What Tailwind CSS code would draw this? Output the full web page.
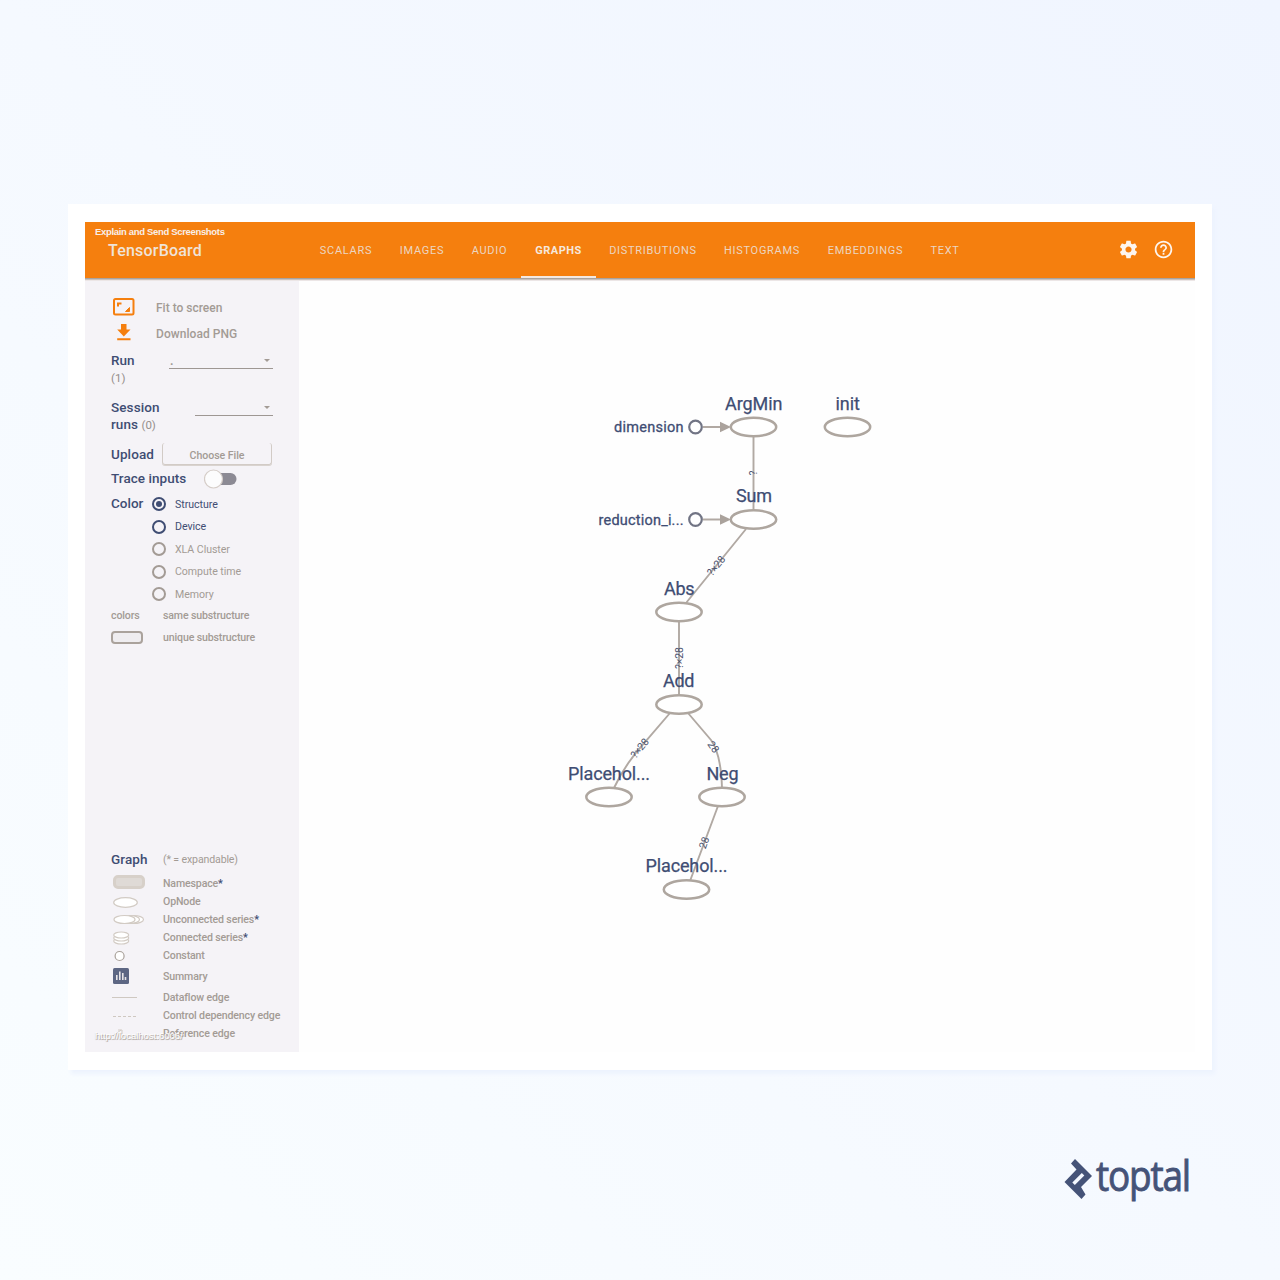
<!DOCTYPE html>
<html lang="en">
<head>
<meta charset="utf-8">
<title>TensorBoard</title>
<script src="https://cdn.jsdelivr.net/npm/@tailwindcss/browser@4"></script>
</head>
<body class="w-[1280px] h-[1280px] overflow-hidden flex flex-col bg-linear-to-tr from-[#f9fdff] via-[#f5f9ff] to-[#f0f5ff] font-['Roboto',sans-serif] text-[#3f4d73]">
<main class="mt-[204px] ml-[68px] w-[1144px] h-[866px] shrink-0 bg-white pt-[18px] px-[17px] shadow-[3px_4px_4px_#edf3fe]">
  <div class="relative w-[1110px] h-[830px] flex flex-col bg-[#fefefe]">
    <header class="relative z-10 h-14 shrink-0 flex items-center bg-[#f57f0e] text-[#efe3d8] shadow-[0_1px_0_#a9a39f,0_2px_0_#c9c1bd,0_3px_0_#ece6e6]">
      <div class="w-[221px] pl-[23px] pt-px text-[16px] font-medium tracking-[0.2px]">TensorBoard</div>
      <nav class="flex h-full text-[11px] tracking-[0.7px] text-[#ecd6c2]">
        <a class="pt-[2px] w-[80px] flex items-center justify-center">SCALARS</a>
        <a class="pt-[2px] w-[72px] flex items-center justify-center">IMAGES</a>
        <a class="pt-[2px] w-[63px] flex items-center justify-center">AUDIO</a>
        <a class="pt-[2px] relative w-[75px] flex items-center justify-center font-bold text-[#f5e8dd] tracking-[0.5px]">GRAPHS<span class="absolute left-0 bottom-0 w-full h-[2px] bg-[#f3e9e2]"></span></a>
        <a class="pt-[2px] w-[114px] flex items-center justify-center">DISTRIBUTIONS</a>
        <a class="pt-[2px] w-[104px] flex items-center justify-center">HISTOGRAMS</a>
        <a class="pt-[2px] w-[103px] flex items-center justify-center">EMBEDDINGS</a>
        <a class="pt-[2px] w-[56px] flex items-center justify-center">TEXT</a>
      </nav>
      <div class="ml-auto mr-[21px] pb-px flex gap-[14px] text-[#fdf5ee]">
        <svg class="size-[21px]" viewBox="0 0 24 24" fill="currentColor"><path d="M19.43 12.98c.04-.32.07-.64.07-.98s-.03-.66-.07-.98l2.11-1.65c.19-.15.24-.42.12-.64l-2-3.46c-.12-.22-.39-.3-.61-.22l-2.49 1c-.52-.4-1.08-.73-1.69-.98l-.38-2.65C14.46 2.18 14.25 2 14 2h-4c-.25 0-.46.18-.49.42l-.38 2.65c-.61.25-1.17.59-1.69.98l-2.49-1c-.23-.09-.49 0-.61.22l-2 3.46c-.13.22-.07.49.12.64l2.11 1.65c-.04.32-.07.65-.07.98s.03.66.07.98l-2.11 1.65c-.19.15-.24.42-.12.64l2 3.46c.12.22.39.3.61.22l2.49-1c.52.4 1.08.73 1.69.98l.38 2.65c.03.24.24.42.49.42h4c.25 0 .46-.18.49-.42l.38-2.65c.61-.25 1.17-.59 1.69-.98l2.49 1c.23.09.49 0 .61-.22l2-3.46c.12-.22.07-.49-.12-.64l-2.11-1.65zM12 15.5c-1.93 0-3.5-1.57-3.5-3.5s1.57-3.5 3.5-3.5 3.5 1.57 3.5 3.5-1.57 3.500-3.5 3.500z"/></svg>
        <svg class="size-[21px]" viewBox="0 0 24 24" fill="currentColor"><path d="M11 18h2v-2h-2v2zm1-16C6.480 2 2 6.480 2 12s4.480 10 10 10 10-4.480 10-10S17.520 2 12 2zm0 18c-4.410 0-8-3.590-8-8s3.590-8 8-8 8 3.590 8 8-3.590 8-8 8zm0-14c-2.210 0-4 1.790-4 4h2c0-1.100.9-2 2-2s2 .9 2 2c0 2-3 1.750-3 5h2c0-2.250 3-2.500 3-5 0-2.210-1.790-4-4-4z"/></svg>
      </div>
    </header>

    <div class="flex flex-1 min-h-0">
      <aside class="w-[214px] h-full shrink-0 bg-[#f5f3f7] pl-[26px] pt-[17px] pb-[9px] flex flex-col justify-between text-[10.6px] text-[#a39b95] whitespace-nowrap">
        <section class="flex flex-col">
          <div class="h-[26px] flex items-center text-[12px] font-medium">
            <svg class="w-[45px] h-[22px]" viewBox="0 0 45 22"><rect x="3" y="2" width="19.500" height="15.600" rx="1.500" fill="none" stroke="#f57f0e" stroke-width="2"/><path d="M7 9.500V6.500h3.500" fill="none" stroke="#f57f0e" stroke-width="2"/><path d="M18.500 10.500v4h-4Z" fill="#f57f0e" stroke="#f57f0e"/></svg>Fit to screen</div>
          <div class="h-[26px] flex items-center text-[12px] font-medium tracking-[0.05px]">
            <svg class="w-[45px] h-[22px]" viewBox="0 0 45 22" fill="#f57f0e"><path d="M10 1h5.500v5.500h4L12.800 13.500 6.200 6.500H10zM6.200 15.200h13.300v2H6.200z"/></svg>Download PNG</div>
          <div class="mt-[5px] h-[35px] flex">
            <div class="w-[58px] text-[13.500px] leading-[17px] font-medium text-[#3f4d73]">Run<div class="text-[11.500px] leading-[18px] font-normal text-[#968f8c]">(1)</div></div>
            <div class="w-[104px] h-[17px] border-b border-[#9e9793] flex items-center justify-between pr-[3px]"><span class="pl-px pt-[2px] font-bold text-[12px]">.</span><span class="border-x-[3px] border-t-[3px] border-x-transparent border-t-[#a39b95]"></span></div>
          </div>
          <div class="mt-[12px] h-[35px] flex">
            <div class="w-[84px] text-[13.500px] leading-[17px] font-medium text-[#3f4d73] tracking-[0.1px]">Session<br>runs <span class="text-[11.500px] font-normal text-[#968f8c] tracking-[-0.1px]">(0)</span></div>
            <div class="w-[78px] h-[17px] border-b border-[#9e9793] flex items-center justify-end pr-[3px]"><span class="border-x-[3px] border-t-[3px] border-x-transparent border-t-[#a39b95]"></span></div>
          </div>
          <div class="mt-[8px] h-6 flex items-center">
            <span class="w-[51px] text-[13.500px] font-medium text-[#3f4d73] tracking-[0.1px]">Upload</span>
            <span class="w-[110px] h-[22px] pt-[4px] rounded-[3px] border border-t-0 border-[#d2cbc6] shadow-[0_1px_0_#d9d3cf] flex items-center justify-center font-medium text-[10.600px] tracking-[-0.05px]">Choose File</span>
          </div>
          <div class="h-[25px] flex items-center">
            <span class="w-[93px] text-[13.500px] font-medium text-[#3f4d73] tracking-[0.05px]">Trace inputs</span>
            <svg class="w-[36px] h-[22px]" viewBox="0 0 36 22"><rect x="6" y="5" width="26.500" height="12" rx="6" fill="#8c8a94"/><circle cx="9.500" cy="11" r="9" fill="#fcfcfd" stroke="#d5cdc8" stroke-width="1.200"/></svg>
          </div>
          <div class="mt-[2px] flex">
            <div class="w-[41px] h-[21px] flex items-center text-[13.500px] font-medium text-[#3f4d73]">Color</div>
            <div class="flex flex-col tracking-[-0.05px]">
              <div class="h-[22.500px] flex items-center gap-[9px] text-[#3f4d73]"><span class="size-[14px] rounded-full border-2 border-current flex items-center justify-center"><span class="size-[6px] rounded-full bg-current"></span></span><span class="pt-px">Structure</span></div>
              <div class="h-[22.500px] flex items-center gap-[9px] text-[#3f4d73]"><span class="size-[14px] rounded-full border-2 border-current"></span><span>Device</span></div>
              <div class="h-[22.500px] flex items-center gap-[9px]"><span class="size-[14px] rounded-full border-2 border-current"></span><span class="pt-px">XLA Cluster</span></div>
              <div class="h-[22.500px] flex items-center gap-[9px]"><span class="size-[14px] rounded-full border-2 border-current"></span><span>Compute time</span></div>
              <div class="h-[22.500px] flex items-center gap-[9px]"><span class="size-[14px] rounded-full border-2 border-current"></span><span class="pt-px">Memory</span></div>
            </div>
          </div>
          <div class="h-[21px] flex items-center font-medium tracking-[-0.15px]"><span class="w-[52px]">colors</span>same substructure</div>
          <div class="h-[22px] flex items-center font-medium tracking-[-0.15px]"><span class="w-[32px] h-[13px] mr-[20px] rounded-[4px] border-2 border-[#aaa29c] bg-[#efedf0]"></span>unique substructure</div>
        </section>

        <section class="flex flex-col font-medium tracking-[-0.15px]">
          <div class="h-[21px] mb-[4px] flex items-center font-normal"><span class="w-[52px] text-[13.500px] font-medium text-[#3f4d73] tracking-[0.1px]">Graph</span>(* = expandable)</div>
          <div class="h-[18px] flex items-center"><span class="w-[32px] h-[14px] ml-[2px] mr-[18px] mb-[2px] rounded-[5px] border-[3px] border-[#d7d0c9] bg-[#dfdad6]"></span><span class="pt-px">Namespace<b class="text-[#3f4d73]">*</b></span></div>
          <div class="h-[19px] flex items-center"><svg class="w-[52px] h-[14px]" viewBox="0 0 52 14"><ellipse cx="14.500" cy="7.500" rx="11.800" ry="4.800" fill="#fff" stroke="#d2cbc4" stroke-width="1.200"/></svg>OpNode</div>
          <div class="h-[17px] flex items-center"><svg class="w-[52px] h-[14px]" viewBox="0 0 52 14" fill="#fff" stroke="#d2cbc4" stroke-width="1.200"><ellipse cx="22.500" cy="6.500" rx="10" ry="4"/><ellipse cx="18.500" cy="6.500" rx="10" ry="4"/><ellipse cx="13.500" cy="6.500" rx="10.500" ry="4"/></svg><span>Unconnected series<b class="text-[#3f4d73]">*</b></span></div>
          <div class="h-[19px] flex items-center"><svg class="w-[52px] h-[14px]" viewBox="0 0 52 14" fill="#fff" stroke="#d2cbc4" stroke-width="1.200"><ellipse cx="10.200" cy="10" rx="7.500" ry="3"/><ellipse cx="10.200" cy="7" rx="7.500" ry="3"/><ellipse cx="10.200" cy="4" rx="7.500" ry="3"/></svg><span>Connected series<b class="text-[#3f4d73]">*</b></span></div>
          <div class="h-[18px] flex items-center"><svg class="w-[52px] h-[14px]" viewBox="0 0 52 14"><circle cx="8.600" cy="7" r="4.500" fill="#fff" stroke="#a8a099" stroke-width="1.200"/></svg><span>Constant</span></div>
          <div class="h-[22px] flex items-center"><svg class="w-[52px] h-[16px]" viewBox="0 0 52 16"><rect x="2" y="0" width="16" height="16" rx="1.500" fill="#5d6683"/><path d="M5.800 12V7M8.800 12V3.500M11.800 12V5M14.500 12V9" stroke="#e8e5e8" stroke-width="1.600"/></svg><span class="pt-px">Summary</span></div>
          <div class="h-[20px] flex items-center"><span class="w-[25px] ml-[1px] mr-[26px] border-t border-[#cfc8c1]"></span><span class="pt-px">Dataflow edge</span></div>
          <div class="h-[18px] flex items-center"><span class="w-[23px] ml-[2px] mr-[27px] border-t border-dashed border-[#cfc8c1]"></span>Control dependency edge</div>
          <div class="h-[18px] flex items-center"><svg class="w-[52px] h-[14px]" viewBox="0 0 52 14"><path d="M2 9L10 3M7 3h4v4" fill="none" stroke="#d2cbc4"/></svg><span>Reference edge</span></div>
        </section>
      </aside>

      <svg class="w-[896px] h-[774px] shrink-0" viewBox="299 278 896 774" font-family="Roboto, sans-serif" fill="#3f4d73">
        <g fill="none" stroke="#b1a9a3" stroke-width="1.900">
          <path d="M753.500 436V511M746 529L686 603M679 621V695M670 713L645 742Q625 764 614 788M688 713L711 740Q721 754 722 788M718 806L690 881"/>
          <path d="M703 427H722M703 519.500H722"/>
        </g>
        <path d="M720 421.800L731 427L720 432.200ZM720 514.300L731 519.500L720 524.700Z" fill="#aaa29c"/>
        <g fill="#fff" stroke="#aea69f" stroke-width="2.500">
          <ellipse cx="753.500" cy="427" rx="22.700" ry="9.200"/>
          <ellipse cx="847.500" cy="427" rx="22.700" ry="9.200"/>
          <ellipse cx="753.500" cy="519.500" rx="22.700" ry="9.200"/>
          <ellipse cx="679" cy="612" rx="22.700" ry="9.200"/>
          <ellipse cx="679" cy="704.500" rx="22.700" ry="9.200"/>
          <ellipse cx="609" cy="797" rx="22.700" ry="9.200"/>
          <ellipse cx="722" cy="797" rx="22.700" ry="9.200"/>
          <ellipse cx="686.500" cy="889.500" rx="22.700" ry="9.200"/>
        </g>
        <g fill="#fff" stroke="#717484" stroke-width="2.200"><circle cx="695.500" cy="427" r="6.300"/><circle cx="695.500" cy="519.500" r="6.300"/></g>
        <g font-size="18" stroke="#3f4d73" stroke-width="0.250">
          <text x="725" y="410" textLength="57.500">ArgMin</text>
          <text x="835.500" y="410" textLength="24.500">init</text>
          <text x="736" y="502" textLength="36">Sum</text>
          <text x="664" y="595" textLength="30.500">Abs</text>
          <text x="663" y="687" textLength="31.500">Add</text>
          <text x="568" y="779.500" textLength="82">Placehol...</text>
          <text x="706.500" y="779.500" textLength="32">Neg</text>
          <text x="645.500" y="872" textLength="82">Placehol...</text>
        </g>
        <g font-size="14.500" stroke="#3f4d73" stroke-width="0.300">
          <text x="614" y="432" textLength="69.500">dimension</text>
          <text x="598.500" y="524.500" textLength="85">reduction_i...</text>
        </g>
        <g font-size="10.500" text-anchor="middle" fill="#4b536f">
          <text transform="translate(756.500 473) rotate(-90)">?</text>
          <text transform="translate(719 568) rotate(-51)" textLength="22">?×28</text>
          <text transform="translate(682.500 658) rotate(-90)" textLength="22">?×28</text>
          <text transform="translate(642.500 750.500) rotate(-50)" textLength="22">?×28</text>
          <text transform="translate(710.500 749) rotate(55)">28</text>
          <text transform="translate(707.500 844) rotate(-70)">28</text>
        </g>
      </svg>
    </div>

    <div class="absolute z-20 left-[10px] top-[4px] text-[9.500px] leading-3 font-bold text-[#f8efe9] font-['Liberation_Sans',sans-serif] whitespace-nowrap tracking-[-0.330px]">Explain and Send Screenshots</div>
    <div class="absolute z-20 left-[10px] top-[808px] text-[9.500px] leading-3 text-white font-['Liberation_Sans',sans-serif] whitespace-nowrap [text-shadow:1px_1px_0_#b5ada8,0_1px_1px_#c5bdb8]">http://localhost:6006/</div>
  </div>
</main>

<footer class="mt-[60px] ml-[1060px]">
  <svg class="w-[140px] h-[90px]" viewBox="1060 1130 140 90" fill="#455378">
    <path d="M1075 1159L1092 1176L1081 1187L1085.500 1194.500L1081.500 1199L1064.500 1182L1076.500 1169.500L1071 1163.500Z"/>
    <path d="M1072.300 1182.500L1081.800 1173L1084.300 1175.500L1074.800 1185Z" fill="#f4f8ff"/>
    <text transform="translate(1096 1191) scale(0.88 1)" font-family="Open Sans, sans-serif" font-size="42" stroke="#455378" stroke-width="0.900" textLength="108">toptal</text>
  </svg>
</footer>
</body>
</html>
